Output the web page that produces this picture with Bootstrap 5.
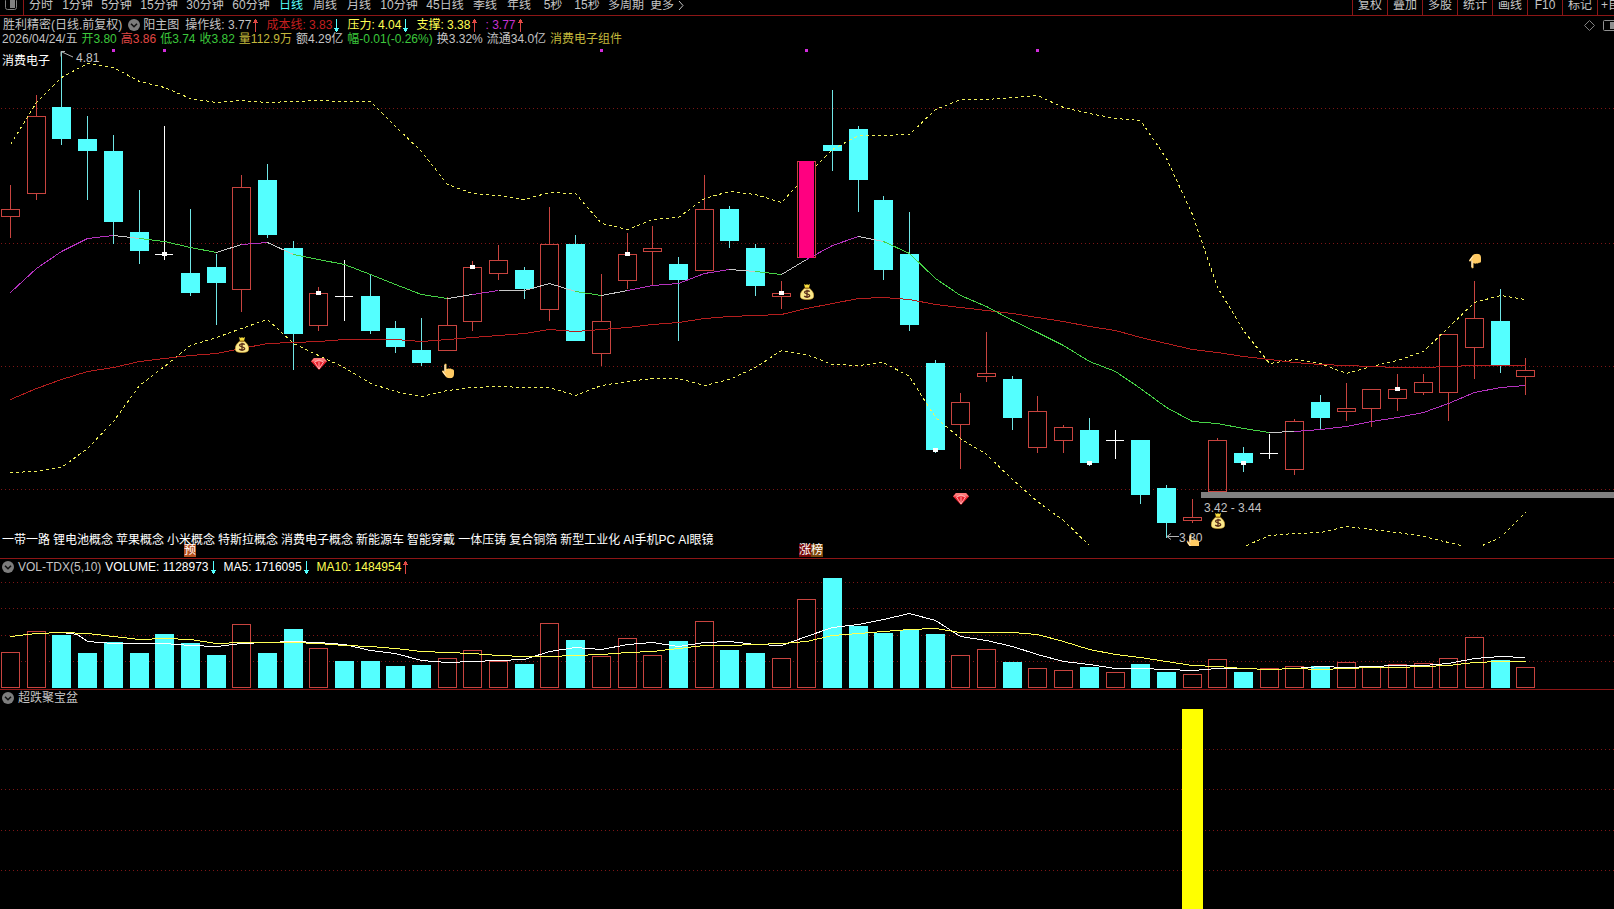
<!DOCTYPE html>
<html lang="zh-CN">
<head>
<meta charset="utf-8">
<meta name="viewport" content="width=device-width, initial-scale=1">
<title>胜利精密 日线</title>
<link rel="stylesheet" href="https://cdn.jsdelivr.net/npm/bootstrap@5.3.0/dist/css/bootstrap.min.css">
<style>
:root{--line:#8c1616;--txt:#c4c4c4;--up:#c8443f;--dn:#54ffff}
body{background:#000;color:var(--txt);font:12px/14px "Liberation Sans","Noto Sans CJK SC",sans-serif;overflow:hidden}
button{background:none;border:0;padding:0;color:inherit;font:inherit;white-space:nowrap}
.topbar{height:16px;border-bottom:1px solid var(--line);overflow:hidden}
.topbar button{height:13px;line-height:13px;margin-top:-1px;flex:none}
.topbar .t2{width:34px}.topbar .t3{width:39px}.topbar .t4{width:46px}.topbar .t5{width:44px}
.topbar .more{width:38px}
.topbar .on{color:var(--dn)}
.topbar .side{width:24px;height:16px;margin-top:0;border-right:1px solid var(--line)}
.tools button{width:35px;height:17px;padding-bottom:4px;border-left:1px solid var(--line)}
.tools .cut{width:17px;overflow:hidden;text-align:left;padding-left:3px}
.legend{height:14px;white-space:nowrap}
.legend svg.arw{margin:0 7px 0 1px}
.l-main{padding-left:3px;margin-top:2px}
.l-main button{margin:0 3px 0 6px}
.l-main .name{margin-right:6px}
.quote{gap:4px;padding-left:2px}
.sub{padding:2px 0 0 2px;gap:4px}
.panel{border-bottom:1px solid var(--line)}
.c-r{color:#e04844}.c-dr{color:#c41f1f}.c-y{color:#ffff54}.c-m{color:#c832d2}.c-g{color:#3cc83c}.c-o{color:#c3b83c}.c-w{color:#fff}
svg{display:block}
.price{height:512px}.vol{height:116px}.signal{height:204px}
.board{left:2px;top:38px;line-height:14px}
.themes{left:2px;bottom:11px;white-space:nowrap;gap:3px}
.tag{position:absolute;bottom:1px;width:12px;height:13px;line-height:13px;color:#fff}
.corner{right:0;top:3px;gap:7px}
svg text{font-size:12px;fill:var(--txt)}
</style>
<script src="https://cdn.jsdelivr.net/npm/bootstrap@5.3.0/dist/js/bootstrap.bundle.min.js"></script>
</head>
<body>
<svg width="0" height="0" class="position-absolute">
<defs>
<symbol id="up" viewBox="0 0 7 13"><path d="M3 0h1v1h1v2h1v1H4v9H3V4H1V3h1V1h1z" fill="#e04844"/></symbol>
<symbol id="down" viewBox="0 0 7 13"><path d="M3 13h1v-1h1v-2h1V9H4V0H3v9H1v1h1v2h1z" fill="#54ffff"/></symbol>
<symbol id="fold" viewBox="0 0 12 12"><circle cx="6" cy="6" r="6" fill="#7d7d7d"/><path d="M3 4.700l3 3 3-3" fill="none" stroke="#111" stroke-width="1.600"/></symbol>
<symbol id="bag" viewBox="0 0 14 16"><path d="M4 0l2 1 1-1 1 1 2-1-1 4H5z" fill="#f7dc3c"/><path d="M5 4h4c3 2 5 5 4.800 8-.2 2.500-2 3.500-6.800 3.500S.4 14.500.2 12C0 9 2 6 5 4z" fill="#fbe88a" stroke="#c9982b" stroke-width=".6"/><path d="M4.600 4.200h4.800" stroke="#8a5a10" stroke-width="1"/><path d="M9.700 7.600C8.500 6.300 4.500 6.500 4.500 8.300c0 2 5.200 1.200 5.200 3.200 0 1.900-4.200 2-5.500.5M7 5.700v8.300" fill="none" stroke="#5a2d1a" stroke-width="1.300"/></symbol>
<symbol id="gem" viewBox="0 0 16 12"><path d="M3 0h10l3 3.500L8 12 0 3.500z" fill="#e8202c"/><path d="M3 0h10l3 3.500H0z" fill="#ff7a7a"/><path d="M3.500 4L8 2l4.500 2L8 11zM8 4v7" fill="none" stroke="#ffb9b9" stroke-width=".9"/></symbol>
<symbol id="hand" viewBox="0 0 12 15"><path d="M2.500 1c0-1.300 2-1.300 2 0v4.500C6 4.600 7 4.800 7.500 5.300c1-.6 2-.1 2.300.5 1-.3 2.200.4 2.200 1.500v3.500c0 2.500-1.500 4-4 4-3 0-4-1-5.500-3.200L.2 8.400c-.5-1 .7-1.900 1.500-1.200l.8.8z" fill="#ffca63"/><path d="M2.900 8V1.500M.8 8l3 4" stroke="#fff0d8" stroke-width="1"/></symbol>
</defs>
</svg>
<div class="d-flex flex-column min-vh-100">
<nav class="topbar d-flex" aria-label="周期">
<button class="side" aria-label="侧栏"><svg width="24" height="16"><rect x="5.500" y="-1.500" width="11" height="11" rx="2" fill="none" stroke="#808080"/><rect x="10" y="0" width="5" height="8" fill="#808080"/></svg></button>
<button class="t2">分时</button><button class="t3">1分钟</button><button class="t3">5分钟</button><button class="t4">15分钟</button><button class="t4">30分钟</button><button class="t4">60分钟</button><button class="t2 on">日线</button><button class="t2">周线</button><button class="t2">月线</button><button class="t4">10分钟</button><button class="t4">45日线</button><button class="t2">季线</button><button class="t2">年线</button><button class="t2">5秒</button><button class="t2">15秒</button><button class="t5">多周期</button><button class="more d-flex align-items-center justify-content-center gap-1">更多<svg width="6" height="9"><path d="M1 0l4 4.500-4 4.500" fill="none" stroke="#c4c4c4"/></svg></button>
<div class="tools d-flex ms-auto"><button>复权</button><button>叠加</button><button>多股</button><button>统计</button><button>画线</button><button>F10</button><button>标记</button><button class="cut">+自选</button></div>
</nav>

<section class="panel position-relative">
<div class="legend l-main d-flex align-items-center">
<span>胜利精密(日线.前复权)</span><button aria-label="收起"><svg width="12" height="12"><use href="#fold"/></svg></button><span class="name">阳主图</span>
<span>操作线: 3.77</span><svg class="arw" width="7" height="13"><use href="#up"/></svg>
<span class="c-dr">成本线: 3.83</span><svg class="arw" width="7" height="13"><use href="#down"/></svg>
<span class="c-y">压力: 4.04</span><svg class="arw" width="7" height="13"><use href="#down"/></svg>
<span class="c-y">支撑: 3.38</span><svg class="arw" width="7" height="13"><use href="#up"/></svg>
<span class="c-m">: 3.77</span><svg class="arw" width="7" height="13"><use href="#up"/></svg>
</div>
<div class="legend quote d-flex"><span>2026/04/24/五</span><span class="c-g">开3.80</span><span class="c-r">高3.86</span><span class="c-g">低3.74</span><span class="c-g">收3.82</span><span class="c-o">量112.9万</span><span>额4.29亿</span><span class="c-g">幅-0.01(-0.26%)</span><span>换3.32%</span><span>流通34.0亿</span><span class="c-o">消费电子组件</span></div>
<svg class="price w-100" id="price" role="img" aria-label="K线图"></svg>
<div class="board position-absolute c-w">消费电子</div>
<div class="themes position-absolute d-flex c-w"><span>一带一路</span><span>锂电池概念</span><span>苹果概念</span><span>小米概念</span><span>特斯拉概念</span><span>消费电子概念</span><span>新能源车</span><span>智能穿戴</span><span>一体压铸</span><span>复合铜箔</span><span>新型工业化</span><span>AI手机PC</span><span>AI眼镜</span></div>
<div id="tags"></div>
<div class="corner position-absolute d-flex"><button aria-label="标记"><svg width="13" height="13"><path d="M6.500 1.500l5 5-5 5-5-5z" fill="none" stroke="#808080"/></svg></button><button aria-label="布局"><svg width="11" height="13"><rect x=".5" y="1.500" width="14" height="10" rx="1" fill="none" stroke="#909090"/><rect x="7" y="3" width="5" height="7" fill="#909090"/></svg></button></div>
</section>

<section class="panel">
<div class="legend sub d-flex align-items-center"><button aria-label="收起"><svg width="12" height="12"><use href="#fold"/></svg></button><span>VOL-TDX(5,10)</span><div class="d-flex align-items-center c-w"><span>VOLUME: 1128973</span><svg class="arw" width="7" height="13"><use href="#down"/></svg><span>MA5: 1716095</span><svg class="arw" width="7" height="13"><use href="#down"/></svg><span class="c-y">MA10: 1484954</span><svg class="arw" width="7" height="13"><use href="#up"/></svg></div></div>
<svg class="vol w-100" id="vol" role="img" aria-label="成交量"></svg>
</section>

<section class="d-flex flex-column flex-fill">
<div class="legend sub d-flex align-items-center"><button aria-label="收起"><svg width="12" height="12"><use href="#fold"/></svg></button><span>超跌聚宝盆</span></div>
<svg class="signal w-100 flex-fill" id="signal" role="img" aria-label="超跌聚宝盆"></svg>
</section>
</div>
<script>
// kind (r rise, d fall, x flat, p limit-up), high, body top, body bottom, low
const K=`r 185 209 217 238|r 95 116 194 200|d 52 107 139 145|d 116 139 151 200|d 135 151 222 244|d 190 232 251 264|x 126 254 255 260|d 209 273 293 296|d 254 267 283 325|r 175 187 290 312|d 164 180 235 238|d 241 248 334 370|r 287 293 326 331|x 260 296 297 321|d 274 296 331 334|d 321 328 347 353|d 318 350 363 366|r 297 325 351 351|r 261 267 322 331|r 245 260 274 280|d 267 270 289 299|r 207 244 310 321|d 235 244 341 341|r 274 321 354 366|r 233 254 281 289|r 226 248 252 285|d 257 264 280 341|r 175 209 271 271|d 206 209 241 248|d 244 248 286 296|r 281 293 297 309|p 161 161 258 258|d 90 145 151 171|d 126 129 180 212|d 196 200 270 280|d 212 254 325 331|d 360 363 450 453|r 393 402 425 469|r 332 373 377 382|d 376 379 418 430|r 396 411 448 453|r 425 427 441 453|d 418 430 463 466|x 430 440 441 459|d 440 440 495 504|d 485 488 523 538|r 499 517 521 523|r 438 440 492 492|d 447 453 463 472|x 434 453 454 459|r 419 421 470 475|d 395 402 418 429|r 383 408 412 421|r 389 389 409 427|r 374 389 399 411|r 374 382 393 395|r 334 334 393 421|r 281 318 348 379|d 289 321 365 373|r 358 370 377 395`.split('|').map(s=>s.split(' ').map((v,i)=>i?+v:v));
const marks={6:254,12:293,18:267,24:254,30:293,36:450,42:463,48:463,54:389};
const upper=[144,102,77,63,67,81,87,98,102,100,102,101,100,101,101,126,151,184,193,195,199,192,193,223,229,219,217,198,191,194,202,175,149,135,135,134,109,99,99,97,95,107,113,118,120,158,214,287,330,363,359,363,373,366,360,351,327,302,295,299];
const lowA=[472,471,467,448,421,385,366,345,337,328,319,343,355,367,383,391,396,390,387,386,387,387,395,385,381,378,378,385,379,367,350,354,364,365,362,376,417,438,454,479,501,520,545];
const lowB=[[48.1,545],[49,535],[50,533],[51,532],[52,526],[53,529],[54,532],[55,536],[56,542],[56.5,545]],lowC=[[57.3,545],[58,537],[59,512]];
const cost=[399,388,379,371,367,361,358,355,353,348,343,342,341,339,339,339,341,339,337,335,333,329,331,329,327,324,322,318,316,315,314,308,303,298,297,299,304,307,310,313,317,321,326,330,337,343,349,352,356,359,362,364,365,366,367,367,366,365,365,365];
const oper=[292,268,251,238,235,238,241,247,252,244,242,254,259,264,274,284,294,298,294,290,290,283,291,295,290,285,283,273,269,271,274,259,245,236,241,253,278,295,306,320,332,345,361,371,388,407,421,423,428,432,431,429,426,421,417,412,403,392,387,385];
// colour of each segment of the operating line
const operRuns=[['m',0,4],['w',4,5],['g',5,8],['w',8,9],['m',9,10],['w',10,11],['g',11,17],['w',17,18],['m',18,19],['w',19,22],['g',22,23],['w',23,24],['m',24,28],['w',28,29],['g',29,30],['w',30,31],['m',31,33],['w',33,34],['g',34,49],['w',49,50],['m',50,59]];
const V=[652,631,635,653,642,653,634,643,655,624,653,629,648,661,661,666,665,658,650,661,664,623,640,656,638,655,641,621,650,653,658,599,578,626,633,630,634,655,649,662,668,670,667,672,664,672,674,659,672,668,666,666,662,667,664,663,658,637,660,667];
const ma5=[[0,636],[1,633],[2,632],[2.6,634],...[641,643,643,643,645,646,643,642,641,642,644,650,653,660,662,661,660,659,651,647,649,644,642,646,642,641,644,645,636,627,624,619,613,620,636,640,646,654,661,664,668,668,669,670,668,668,669,668,666,667,666,665,665,663,658,656,657].map((y,i)=>[i+3,y])];
const ma10=[636,633,632,633,636,639,638,639,643,642,642,642,643,645,646,648,651,652,653,655,656,656,655,654,652,651,648,645,645,644,643,641,635,633,631,629,628,632,632,632,634,641,649,654,657,661,665,666,668,669,668,669,668,667,667,666,665,662,661,661];

function draw(){
const W=document.getElementById('price').clientWidth,s=W/1614,X=i=>Math.round((10.1+i*25.684)*s);
const b=Math.max(4,Math.round(9*s));
const grid=ys=>ys.map(y=>`<path d="M1 ${y}.5H${W}" stroke="#7d1616" stroke-dasharray="1 3" shape-rendering="crispEdges"/>`).join('');
const line=(p,c,x='')=>`<polyline points="${p.map((v,i)=>Array.isArray(v)?(X(v[0])+.5)+','+(v[1]+.5):(X(i)+.5)+','+(v+.5)).join(' ')}" fill="none" stroke="${c}" shape-rendering="crispEdges" ${x}/>`;
const box=(x,t,h)=>`<rect x="${x-b+.5}" y="${t+.5}" width="${2*b}" height="${h-1}" fill="none" stroke="#c8443f"/>`;
const bar=(x,t,h)=>`<rect x="${x-b}" y="${t}" width="${2*b+1}" height="${h}" fill="#54ffff"/>`;
const v=(x,a,c,k)=>c>a?`<rect x="${x}" y="${a}" width="1" height="${c-a}" fill="${k}"/>`:'';
const icon=(n,i,y,w,h,t='')=>`<g transform="translate(${X(i)+1} ${y}) ${t}"><use href="#${n}" x="${-w/2}" y="${-h/2}" width="${w}" height="${h}"/></g>`;
const fit=(id,y0,html)=>{const e=document.getElementById(id);e.setAttribute('viewBox',`0 ${y0} ${W} ${e.clientHeight}`);e.innerHTML=html};
let o=grid([108,243,366,489]);
K.forEach(([k,h,t,m,l],i)=>{const x=X(i);
 if(k=='r'||k=='p')o+=v(x,h,t,'#c8443f')+v(x,m,l,'#c8443f')+box(x,t,m-t);
 else if(k=='d')o+=v(x,h,l,'#70e6e6')+bar(x,t,m-t);
 else o+=v(x,h,l,'#fff')+`<rect x="${x-b}" y="${t}" width="${2*b}" height="1" fill="#fff"/>`});
const D='stroke-dasharray="3 3"',C={m:'#b432be',w:'#c8c8c8',g:'#46d246'};
[upper,lowA,lowB,lowC].forEach(p=>o+=line(p,'#f0f05a',D));
o+=line(cost,'#b41e1e');
operRuns.forEach(([c,a,z])=>o+=line(oper.slice(a,z+1).map((y,i)=>[a+i,y]),C[c]));
K.forEach(([k,h,t,m],i)=>{if(k=='p')o+=`<rect x="${X(i)-b+2}" y="${t}" width="${2*b-3}" height="${m-t}" fill="#ff0080"/>`});
for(const i in marks)o+=`<rect x="${X(i)-2}" y="${marks[i]-2}" width="5" height="4" fill="#fff"/>`;
[4,6,23,31,40].forEach(i=>o+=`<rect x="${X(i)-1}" y="49" width="3" height="3" fill="#d22cdc"/>`);
const x2=X(2),x45=X(45),x46=X(46);
o+=`<path d="M${x2+4} 51.500h-4v5M${x2+1} 52l11 5" fill="none" stroke="#b4b4b4"/><text x="${x2+15}" y="62">4.81</text>`;
o+=`<rect x="${x46+9}" y="492" width="${W-x46-9}" height="6" fill="#808080"/><text x="${x46+12}" y="512">3.42 - 3.44</text>`;
o+=`<path d="M${x45+13} 536.500h-12m4-3l-4 3 4 3" fill="none" stroke="#b4b4b4"/><text x="${x45+13}" y="542">3.30</text>`;
[[9,345],[31,292],[47,521]].forEach(([i,y])=>o+=icon('bag',i,y,14,16));
[[12,364],[37,499]].forEach(([i,y])=>o+=icon('gem',i,y,16,12));
o+=icon('hand',17,371,12,15)+icon('hand',57,261,12,15,'scale(1 -1)');
o+=`<clipPath id="cl"><rect x="0" y="500" width="${W}" height="46"/></clipPath><g clip-path="url(#cl)">${icon('hand',46,542,12,15)}</g>`;
fit('price',46,o);
let q=grid([582,608,635,661]);
V.forEach((t,i)=>{const red=/[rp]/.test(K[i][0])||i==43||i==49;q+=red?`<rect x="${X(i)-b}" y="${t}" width="${2*b+1}" height="${688-t}" fill="#000"/>`+box(X(i),t,688-t):bar(X(i),t,688-t)});
fit('vol',573,q+line(ma5,'#fff')+line(ma10,'#ffff54'));
const H=document.getElementById('signal').clientHeight;
fit('signal',704,grid([749,789,830,870])+`<rect x="${X(46)-10}" y="709" width="21" height="${H}" fill="#ff0"/>`);
document.getElementById('tags').innerHTML=[['预',7,-6,'#b4501e'],['涨',31,-7,'#780808'],['榜',31,5,'#7d460a']].map(([t,i,d,c])=>`<span class="tag" style="left:${X(i)+d}px;background:${c}">${t}</span>`).join('');
}
draw();addEventListener('resize',draw);
</script>
</body>
</html>
